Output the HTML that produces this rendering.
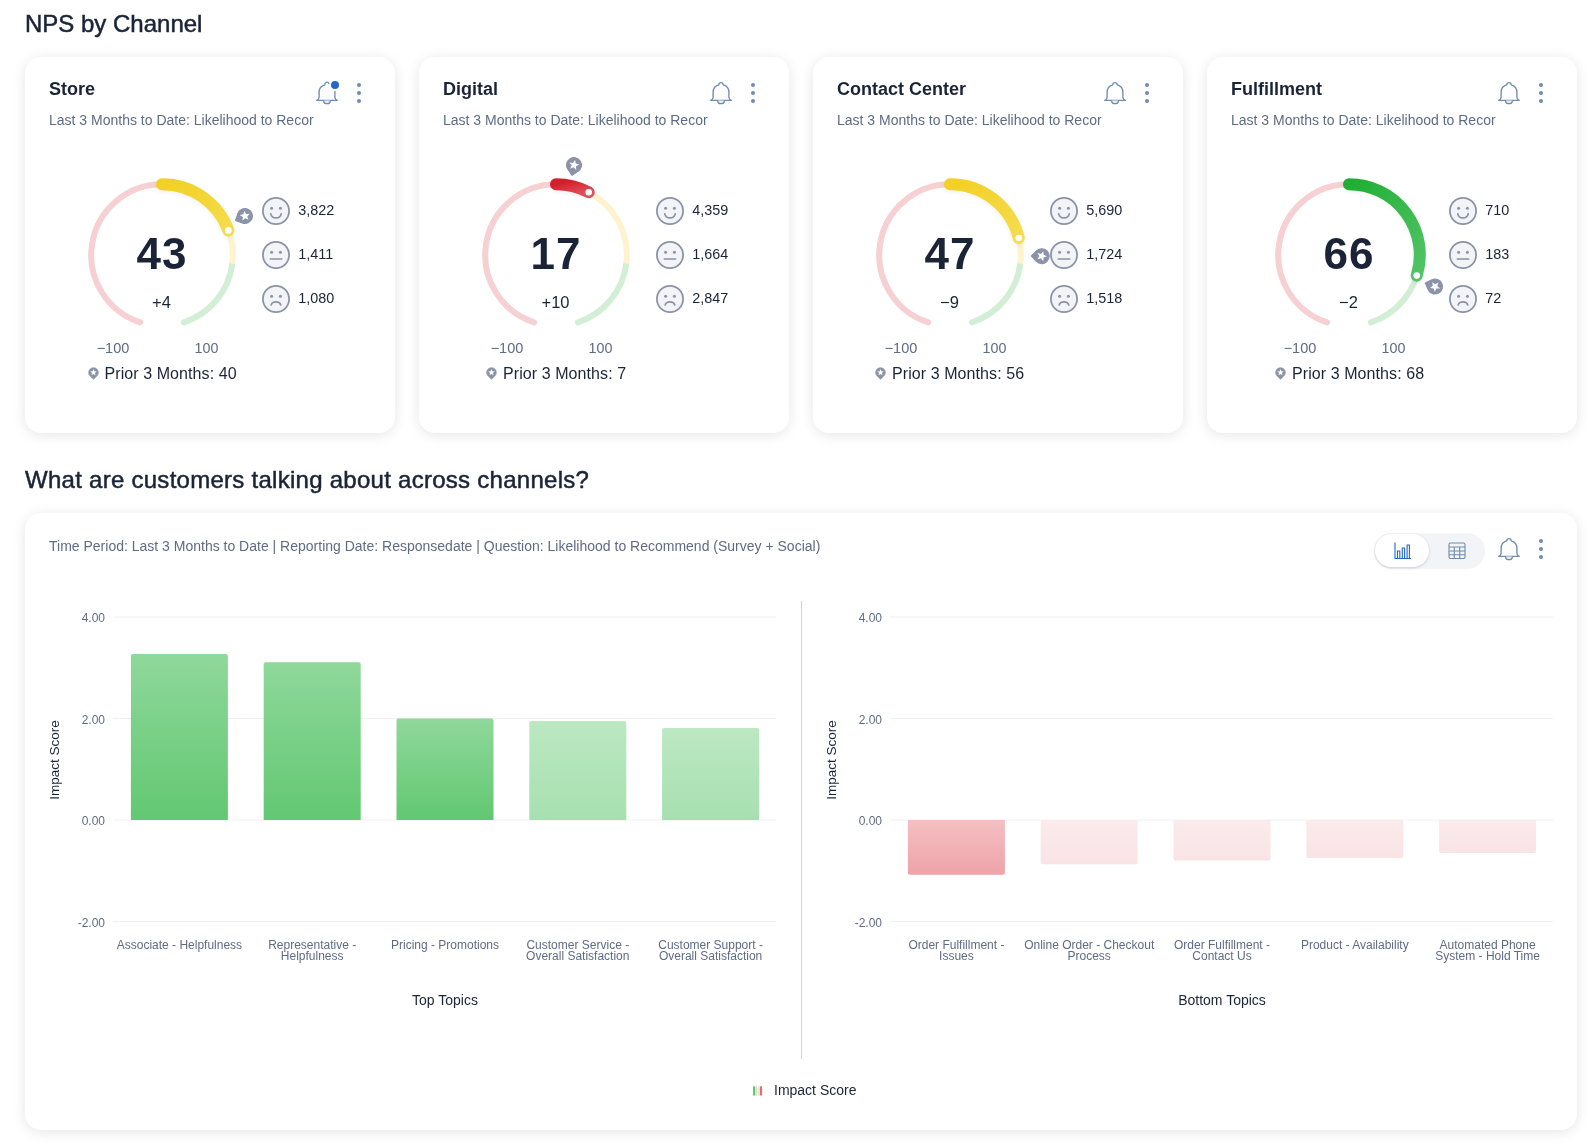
<!DOCTYPE html>
<html lang="en"><head><meta charset="utf-8"><title>NPS by Channel</title>
<style>
html,body{margin:0;padding:0;background:#fff}
body{width:1588px;height:1144px;position:relative;overflow:hidden;font-family:"Liberation Sans", sans-serif;color:#1b2437}
.abs{position:absolute}
#root{position:absolute;left:0;top:0;width:1588px;height:1144px;will-change:transform}
h2{position:absolute;margin:0;left:25px;font-size:24px;font-weight:400;color:#1b2437;white-space:nowrap;line-height:30px;-webkit-text-stroke:0.5px #1b2437}
.card{position:absolute;background:#fff;border-radius:16px;box-shadow:0 2px 13px rgba(0,0,0,0.105)}
.ctitle{position:absolute;left:24px;top:21px;font-size:18px;font-weight:700;line-height:22px;white-space:nowrap;color:#1b2437}
.csub{position:absolute;left:24px;top:54px;font-size:14px;line-height:18px;white-space:nowrap;color:#5f6b85}
.prior{position:absolute;top:306px;font-size:16px;letter-spacing:0.08px;line-height:22px;white-space:nowrap;display:flex;align-items:center;color:#1b2437}
svg text{font-family:"Liberation Sans", sans-serif}
</style></head><body>
<div id="root">
<h2 style="top:9px" id="h1">NPS by Channel</h2>

<div class="card" style="left:25px;top:57px;width:370px;height:376px">
<div class="ctitle">Store</div>
<div class="csub">Last 3 Months to Date: Likelihood to Recor</div>
<svg class="abs" style="left:290px;top:23px;overflow:visible" width="26" height="26" viewBox="0 0 26 26"><path d="M13.9 3.5A2.1 2.1 0 0 0 9.9 4.7C9.8 5.2 9.2 5.2 8.3 5.4C6.3 6.3 4.1 9.0 4.1 12.2V17.2C4.1 18.6 3.2 19.6 1.8 20.4H22.2C20.8 19.6 19.9 18.6 19.9 17.2V11.4" fill="none" stroke="#6f8bb0" stroke-width="1.35" stroke-linejoin="round" stroke-linecap="round"/><path d="M8.6 20.4A3.4 3.2 0 0 0 15.4 20.4" fill="#eef1f6" stroke="#6f8bb0" stroke-width="1.35"/><circle cx="20" cy="5" r="4" fill="#2469c8"/></svg>
<svg class="abs" style="left:331px;top:24px" width="6" height="24" viewBox="0 0 6 24"><circle cx="3" cy="4" r="2" fill="#6f8bb0"/><circle cx="3" cy="12" r="2" fill="#6f8bb0"/><circle cx="3" cy="20" r="2" fill="#6f8bb0"/></svg>
<svg class="abs" style="left:0;top:0" width="370" height="376" viewBox="0 0 370 376">
<defs><linearGradient id="g0" x1="0" y1="0" x2="1" y2="1"><stop offset="0" stop-color="#f2d024"/><stop offset="1" stop-color="#f6dc4e"/></linearGradient><filter id="sh0" x="-20%" y="-20%" width="140%" height="140%"><feGaussianBlur stdDeviation="2"/></filter></defs>
<path d="M115.12 265.33A70.8 70.8 0 0 1 137.00 127.20" fill="none" stroke="#f6d0d2" stroke-width="6" stroke-linecap="round"/>
<path d="M207.27 206.63A70.8 70.8 0 0 1 158.88 265.33" fill="none" stroke="#d2efd6" stroke-width="6" stroke-linecap="round"/>
<path d="M203.39 173.39A70.8 70.8 0 0 1 207.27 206.63" fill="none" stroke="#fdf4cf" stroke-width="6"/>
<path d="M137.00 127.20A70.8 70.8 0 0 1 203.39 173.39" fill="none" stroke="#000" stroke-opacity="0.05" stroke-width="12" stroke-linecap="round" filter="url(#sh0)" transform="translate(0 2)"/>
<path d="M137.00 127.20A70.8 70.8 0 0 1 203.39 173.39" fill="none" stroke="url(#g0)" stroke-width="12" stroke-linecap="round"/>
<circle cx="203.39" cy="173.39" r="3.3" fill="#fff"/>
<g transform="translate(219.97 158.96) scale(1.0)"><path transform="rotate(424.8)" d="M-5.25 5.36A7.5 7.5 0 1 1 5.25 5.36L0 10.5Z" fill="#8a93a8" stroke="#8a93a8" stroke-width="1" stroke-linejoin="round"/><path transform="rotate(424.8)" d="M0.00 -5.30L1.35 -1.86L5.04 -1.64L2.19 0.71L3.12 4.29L0.00 2.30L-3.12 4.29L-2.19 0.71L-5.04 -1.64L-1.35 -1.86Z" fill="#fff"/></g>
<text x="137.0" y="212" text-anchor="middle" font-size="44" font-weight="700" letter-spacing="1" fill="#1b2437">43</text>
<text x="136.5" y="251" text-anchor="middle" font-size="16.5" fill="#1b2437">+4</text>
<text x="88.0" y="296" text-anchor="middle" font-size="14.5" fill="#5f6b85">−100</text>
<text x="181.5" y="296" text-anchor="middle" font-size="14.3" fill="#5f6b85">100</text>
<circle cx="251.0" cy="154.0" r="13.1" fill="#f3f4f7" stroke="#8a93a8" stroke-width="1.75"/><circle cx="246.6" cy="151.3" r="1.5" fill="#8a93a8"/><circle cx="255.4" cy="151.3" r="1.5" fill="#8a93a8"/><path d="M245.8 156.8C246.8 162.2 255.2 162.2 256.2 156.8" fill="none" stroke="#8a93a8" stroke-width="1.7" stroke-linecap="round"/>
<text x="273.2" y="158.2" font-size="14.4" fill="#1b2437">3,822</text>
<circle cx="251.0" cy="198.0" r="13.1" fill="#f3f4f7" stroke="#8a93a8" stroke-width="1.75"/><circle cx="246.6" cy="195.3" r="1.5" fill="#8a93a8"/><circle cx="255.4" cy="195.3" r="1.5" fill="#8a93a8"/><path d="M245.4 202.0H256.6" fill="none" stroke="#8a93a8" stroke-width="1.7" stroke-linecap="round"/>
<text x="273.2" y="202.2" font-size="14.4" fill="#1b2437">1,411</text>
<circle cx="251.0" cy="242.0" r="13.1" fill="#f3f4f7" stroke="#8a93a8" stroke-width="1.75"/><circle cx="246.6" cy="239.3" r="1.5" fill="#8a93a8"/><circle cx="255.4" cy="239.3" r="1.5" fill="#8a93a8"/><path d="M246.2 247.9C247.4 243.9 254.6 243.9 255.8 247.9" fill="none" stroke="#8a93a8" stroke-width="1.7" stroke-linecap="round"/>
<text x="273.2" y="246.2" font-size="14.4" fill="#1b2437">1,080</text>
</svg>
<div class="prior" id="prior0" style="left:62.5px"><svg width="11" height="13" viewBox="-8.5 -8.5 17 20" style="margin-right:6px;position:relative;top:-1px"><g transform="translate(0.00 0.00) scale(1.0)"><path transform="rotate(0.0)" d="M-5.25 5.36A7.5 7.5 0 1 1 5.25 5.36L0 10.5Z" fill="#8a93a8" stroke="#8a93a8" stroke-width="1" stroke-linejoin="round"/><path transform="rotate(0.0)" d="M0.00 -5.30L1.35 -1.86L5.04 -1.64L2.19 0.71L3.12 4.29L0.00 2.30L-3.12 4.29L-2.19 0.71L-5.04 -1.64L-1.35 -1.86Z" fill="#fff"/></g></svg><span>Prior 3 Months: 40</span></div>
</div>
<div class="card" style="left:419px;top:57px;width:370px;height:376px">
<div class="ctitle">Digital</div>
<div class="csub">Last 3 Months to Date: Likelihood to Recor</div>
<svg class="abs" style="left:290px;top:23px;overflow:visible" width="26" height="26" viewBox="0 0 26 26"><path d="M1.8 20.4H22.2C20.8 19.6 19.9 18.6 19.9 17.2V12.2C19.9 9.0 17.7 6.3 15.7 5.4C14.8 5.2 14.2 5.2 14.1 4.7A2.1 2.1 0 0 0 9.9 4.7C9.8 5.2 9.2 5.2 8.3 5.4C6.3 6.3 4.1 9.0 4.1 12.2V17.2C4.1 18.6 3.2 19.6 1.8 20.4Z" fill="none" stroke="#6f8bb0" stroke-width="1.35" stroke-linejoin="round"/><path d="M8.6 20.4A3.4 3.2 0 0 0 15.4 20.4" fill="#eef1f6" stroke="#6f8bb0" stroke-width="1.35"/></svg>
<svg class="abs" style="left:331px;top:24px" width="6" height="24" viewBox="0 0 6 24"><circle cx="3" cy="4" r="2" fill="#6f8bb0"/><circle cx="3" cy="12" r="2" fill="#6f8bb0"/><circle cx="3" cy="20" r="2" fill="#6f8bb0"/></svg>
<svg class="abs" style="left:0;top:0" width="370" height="376" viewBox="0 0 370 376">
<defs><linearGradient id="g1" x1="0" y1="0" x2="1" y2="1"><stop offset="0" stop-color="#d21f2b"/><stop offset="1" stop-color="#e0505a"/></linearGradient><filter id="sh1" x="-20%" y="-20%" width="140%" height="140%"><feGaussianBlur stdDeviation="2"/></filter></defs>
<path d="M115.12 265.33A70.8 70.8 0 0 1 137.00 127.20" fill="none" stroke="#f6d0d2" stroke-width="6" stroke-linecap="round"/>
<path d="M207.27 206.63A70.8 70.8 0 0 1 158.88 265.33" fill="none" stroke="#d2efd6" stroke-width="6" stroke-linecap="round"/>
<path d="M169.74 135.22A70.8 70.8 0 0 1 207.27 206.63" fill="none" stroke="#fdf4cf" stroke-width="6"/>
<path d="M137.00 127.20A70.8 70.8 0 0 1 169.74 135.22" fill="none" stroke="#000" stroke-opacity="0.05" stroke-width="12" stroke-linecap="round" filter="url(#sh1)" transform="translate(0 2)"/>
<path d="M137.00 127.20A70.8 70.8 0 0 1 169.74 135.22" fill="none" stroke="url(#g1)" stroke-width="12" stroke-linecap="round"/>
<circle cx="169.74" cy="135.22" r="3.3" fill="#fff"/>
<g transform="translate(155.03 108.09) scale(1.0)"><path transform="rotate(371.3)" d="M-5.25 5.36A7.5 7.5 0 1 1 5.25 5.36L0 10.5Z" fill="#8a93a8" stroke="#8a93a8" stroke-width="1" stroke-linejoin="round"/><path transform="rotate(371.3)" d="M0.00 -5.30L1.35 -1.86L5.04 -1.64L2.19 0.71L3.12 4.29L0.00 2.30L-3.12 4.29L-2.19 0.71L-5.04 -1.64L-1.35 -1.86Z" fill="#fff"/></g>
<text x="137.0" y="212" text-anchor="middle" font-size="44" font-weight="700" letter-spacing="1" fill="#1b2437">17</text>
<text x="136.5" y="251" text-anchor="middle" font-size="16.5" fill="#1b2437">+10</text>
<text x="88.0" y="296" text-anchor="middle" font-size="14.5" fill="#5f6b85">−100</text>
<text x="181.5" y="296" text-anchor="middle" font-size="14.3" fill="#5f6b85">100</text>
<circle cx="251.0" cy="154.0" r="13.1" fill="#f3f4f7" stroke="#8a93a8" stroke-width="1.75"/><circle cx="246.6" cy="151.3" r="1.5" fill="#8a93a8"/><circle cx="255.4" cy="151.3" r="1.5" fill="#8a93a8"/><path d="M245.8 156.8C246.8 162.2 255.2 162.2 256.2 156.8" fill="none" stroke="#8a93a8" stroke-width="1.7" stroke-linecap="round"/>
<text x="273.2" y="158.2" font-size="14.4" fill="#1b2437">4,359</text>
<circle cx="251.0" cy="198.0" r="13.1" fill="#f3f4f7" stroke="#8a93a8" stroke-width="1.75"/><circle cx="246.6" cy="195.3" r="1.5" fill="#8a93a8"/><circle cx="255.4" cy="195.3" r="1.5" fill="#8a93a8"/><path d="M245.4 202.0H256.6" fill="none" stroke="#8a93a8" stroke-width="1.7" stroke-linecap="round"/>
<text x="273.2" y="202.2" font-size="14.4" fill="#1b2437">1,664</text>
<circle cx="251.0" cy="242.0" r="13.1" fill="#f3f4f7" stroke="#8a93a8" stroke-width="1.75"/><circle cx="246.6" cy="239.3" r="1.5" fill="#8a93a8"/><circle cx="255.4" cy="239.3" r="1.5" fill="#8a93a8"/><path d="M246.2 247.9C247.4 243.9 254.6 243.9 255.8 247.9" fill="none" stroke="#8a93a8" stroke-width="1.7" stroke-linecap="round"/>
<text x="273.2" y="246.2" font-size="14.4" fill="#1b2437">2,847</text>
</svg>
<div class="prior" id="prior1" style="left:67px"><svg width="11" height="13" viewBox="-8.5 -8.5 17 20" style="margin-right:6px;position:relative;top:-1px"><g transform="translate(0.00 0.00) scale(1.0)"><path transform="rotate(0.0)" d="M-5.25 5.36A7.5 7.5 0 1 1 5.25 5.36L0 10.5Z" fill="#8a93a8" stroke="#8a93a8" stroke-width="1" stroke-linejoin="round"/><path transform="rotate(0.0)" d="M0.00 -5.30L1.35 -1.86L5.04 -1.64L2.19 0.71L3.12 4.29L0.00 2.30L-3.12 4.29L-2.19 0.71L-5.04 -1.64L-1.35 -1.86Z" fill="#fff"/></g></svg><span>Prior 3 Months: 7</span></div>
</div>
<div class="card" style="left:813px;top:57px;width:370px;height:376px">
<div class="ctitle">Contact Center</div>
<div class="csub">Last 3 Months to Date: Likelihood to Recor</div>
<svg class="abs" style="left:290px;top:23px;overflow:visible" width="26" height="26" viewBox="0 0 26 26"><path d="M1.8 20.4H22.2C20.8 19.6 19.9 18.6 19.9 17.2V12.2C19.9 9.0 17.7 6.3 15.7 5.4C14.8 5.2 14.2 5.2 14.1 4.7A2.1 2.1 0 0 0 9.9 4.7C9.8 5.2 9.2 5.2 8.3 5.4C6.3 6.3 4.1 9.0 4.1 12.2V17.2C4.1 18.6 3.2 19.6 1.8 20.4Z" fill="none" stroke="#6f8bb0" stroke-width="1.35" stroke-linejoin="round"/><path d="M8.6 20.4A3.4 3.2 0 0 0 15.4 20.4" fill="#eef1f6" stroke="#6f8bb0" stroke-width="1.35"/></svg>
<svg class="abs" style="left:331px;top:24px" width="6" height="24" viewBox="0 0 6 24"><circle cx="3" cy="4" r="2" fill="#6f8bb0"/><circle cx="3" cy="12" r="2" fill="#6f8bb0"/><circle cx="3" cy="20" r="2" fill="#6f8bb0"/></svg>
<svg class="abs" style="left:0;top:0" width="370" height="376" viewBox="0 0 370 376">
<defs><linearGradient id="g2" x1="0" y1="0" x2="1" y2="1"><stop offset="0" stop-color="#f2d024"/><stop offset="1" stop-color="#f6dc4e"/></linearGradient><filter id="sh2" x="-20%" y="-20%" width="140%" height="140%"><feGaussianBlur stdDeviation="2"/></filter></defs>
<path d="M115.12 265.33A70.8 70.8 0 0 1 137.00 127.20" fill="none" stroke="#f6d0d2" stroke-width="6" stroke-linecap="round"/>
<path d="M207.27 206.63A70.8 70.8 0 0 1 158.88 265.33" fill="none" stroke="#d2efd6" stroke-width="6" stroke-linecap="round"/>
<path d="M205.74 181.04A70.8 70.8 0 0 1 207.27 206.63" fill="none" stroke="#fdf4cf" stroke-width="6"/>
<path d="M137.00 127.20A70.8 70.8 0 0 1 205.74 181.04" fill="none" stroke="#000" stroke-opacity="0.05" stroke-width="12" stroke-linecap="round" filter="url(#sh2)" transform="translate(0 2)"/>
<path d="M137.00 127.20A70.8 70.8 0 0 1 205.74 181.04" fill="none" stroke="url(#g2)" stroke-width="12" stroke-linecap="round"/>
<circle cx="205.74" cy="181.04" r="3.3" fill="#fff"/>
<g transform="translate(228.69 199.15) scale(1.0)"><path transform="rotate(450.7)" d="M-5.25 5.36A7.5 7.5 0 1 1 5.25 5.36L0 10.5Z" fill="#8a93a8" stroke="#8a93a8" stroke-width="1" stroke-linejoin="round"/><path transform="rotate(450.7)" d="M0.00 -5.30L1.35 -1.86L5.04 -1.64L2.19 0.71L3.12 4.29L0.00 2.30L-3.12 4.29L-2.19 0.71L-5.04 -1.64L-1.35 -1.86Z" fill="#fff"/></g>
<text x="137.0" y="212" text-anchor="middle" font-size="44" font-weight="700" letter-spacing="1" fill="#1b2437">47</text>
<text x="136.5" y="251" text-anchor="middle" font-size="16.5" fill="#1b2437">−9</text>
<text x="88.0" y="296" text-anchor="middle" font-size="14.5" fill="#5f6b85">−100</text>
<text x="181.5" y="296" text-anchor="middle" font-size="14.3" fill="#5f6b85">100</text>
<circle cx="251.0" cy="154.0" r="13.1" fill="#f3f4f7" stroke="#8a93a8" stroke-width="1.75"/><circle cx="246.6" cy="151.3" r="1.5" fill="#8a93a8"/><circle cx="255.4" cy="151.3" r="1.5" fill="#8a93a8"/><path d="M245.8 156.8C246.8 162.2 255.2 162.2 256.2 156.8" fill="none" stroke="#8a93a8" stroke-width="1.7" stroke-linecap="round"/>
<text x="273.2" y="158.2" font-size="14.4" fill="#1b2437">5,690</text>
<circle cx="251.0" cy="198.0" r="13.1" fill="#f3f4f7" stroke="#8a93a8" stroke-width="1.75"/><circle cx="246.6" cy="195.3" r="1.5" fill="#8a93a8"/><circle cx="255.4" cy="195.3" r="1.5" fill="#8a93a8"/><path d="M245.4 202.0H256.6" fill="none" stroke="#8a93a8" stroke-width="1.7" stroke-linecap="round"/>
<text x="273.2" y="202.2" font-size="14.4" fill="#1b2437">1,724</text>
<circle cx="251.0" cy="242.0" r="13.1" fill="#f3f4f7" stroke="#8a93a8" stroke-width="1.75"/><circle cx="246.6" cy="239.3" r="1.5" fill="#8a93a8"/><circle cx="255.4" cy="239.3" r="1.5" fill="#8a93a8"/><path d="M246.2 247.9C247.4 243.9 254.6 243.9 255.8 247.9" fill="none" stroke="#8a93a8" stroke-width="1.7" stroke-linecap="round"/>
<text x="273.2" y="246.2" font-size="14.4" fill="#1b2437">1,518</text>
</svg>
<div class="prior" id="prior2" style="left:62px"><svg width="11" height="13" viewBox="-8.5 -8.5 17 20" style="margin-right:6px;position:relative;top:-1px"><g transform="translate(0.00 0.00) scale(1.0)"><path transform="rotate(0.0)" d="M-5.25 5.36A7.5 7.5 0 1 1 5.25 5.36L0 10.5Z" fill="#8a93a8" stroke="#8a93a8" stroke-width="1" stroke-linejoin="round"/><path transform="rotate(0.0)" d="M0.00 -5.30L1.35 -1.86L5.04 -1.64L2.19 0.71L3.12 4.29L0.00 2.30L-3.12 4.29L-2.19 0.71L-5.04 -1.64L-1.35 -1.86Z" fill="#fff"/></g></svg><span>Prior 3 Months: 56</span></div>
</div>
<div class="card" style="left:1207px;top:57px;width:370px;height:376px">
<div class="ctitle">Fulfillment</div>
<div class="csub">Last 3 Months to Date: Likelihood to Recor</div>
<svg class="abs" style="left:290px;top:23px;overflow:visible" width="26" height="26" viewBox="0 0 26 26"><path d="M1.8 20.4H22.2C20.8 19.6 19.9 18.6 19.9 17.2V12.2C19.9 9.0 17.7 6.3 15.7 5.4C14.8 5.2 14.2 5.2 14.1 4.7A2.1 2.1 0 0 0 9.9 4.7C9.8 5.2 9.2 5.2 8.3 5.4C6.3 6.3 4.1 9.0 4.1 12.2V17.2C4.1 18.6 3.2 19.6 1.8 20.4Z" fill="none" stroke="#6f8bb0" stroke-width="1.35" stroke-linejoin="round"/><path d="M8.6 20.4A3.4 3.2 0 0 0 15.4 20.4" fill="#eef1f6" stroke="#6f8bb0" stroke-width="1.35"/></svg>
<svg class="abs" style="left:331px;top:24px" width="6" height="24" viewBox="0 0 6 24"><circle cx="3" cy="4" r="2" fill="#6f8bb0"/><circle cx="3" cy="12" r="2" fill="#6f8bb0"/><circle cx="3" cy="20" r="2" fill="#6f8bb0"/></svg>
<svg class="abs" style="left:0;top:0" width="370" height="376" viewBox="0 0 370 376">
<defs><linearGradient id="g3" x1="0" y1="0" x2="1" y2="1"><stop offset="0" stop-color="#1fae33"/><stop offset="1" stop-color="#52c466"/></linearGradient><filter id="sh3" x="-20%" y="-20%" width="140%" height="140%"><feGaussianBlur stdDeviation="2"/></filter></defs>
<path d="M120.12 265.33A70.8 70.8 0 0 1 142.00 127.20" fill="none" stroke="#f6d0d2" stroke-width="6" stroke-linecap="round"/>
<path d="M212.27 206.63A70.8 70.8 0 0 1 163.88 265.33" fill="none" stroke="#d2efd6" stroke-width="6" stroke-linecap="round"/>
<path d="M142.00 127.20A70.8 70.8 0 0 1 209.74 218.61" fill="none" stroke="#000" stroke-opacity="0.05" stroke-width="12" stroke-linecap="round" filter="url(#sh3)" transform="translate(0 2)"/>
<path d="M142.00 127.20A70.8 70.8 0 0 1 209.74 218.61" fill="none" stroke="url(#g3)" stroke-width="12" stroke-linecap="round"/>
<circle cx="209.74" cy="218.61" r="3.3" fill="#fff"/>
<g transform="translate(228.08 229.60) scale(1.0)"><path transform="rotate(470.2)" d="M-5.25 5.36A7.5 7.5 0 1 1 5.25 5.36L0 10.5Z" fill="#8a93a8" stroke="#8a93a8" stroke-width="1" stroke-linejoin="round"/><path transform="rotate(470.2)" d="M0.00 -5.30L1.35 -1.86L5.04 -1.64L2.19 0.71L3.12 4.29L0.00 2.30L-3.12 4.29L-2.19 0.71L-5.04 -1.64L-1.35 -1.86Z" fill="#fff"/></g>
<text x="142.0" y="212" text-anchor="middle" font-size="44" font-weight="700" letter-spacing="1" fill="#1b2437">66</text>
<text x="141.5" y="251" text-anchor="middle" font-size="16.5" fill="#1b2437">−2</text>
<text x="93.0" y="296" text-anchor="middle" font-size="14.5" fill="#5f6b85">−100</text>
<text x="186.5" y="296" text-anchor="middle" font-size="14.3" fill="#5f6b85">100</text>
<circle cx="256.0" cy="154.0" r="13.1" fill="#f3f4f7" stroke="#8a93a8" stroke-width="1.75"/><circle cx="251.6" cy="151.3" r="1.5" fill="#8a93a8"/><circle cx="260.4" cy="151.3" r="1.5" fill="#8a93a8"/><path d="M250.8 156.8C251.8 162.2 260.2 162.2 261.2 156.8" fill="none" stroke="#8a93a8" stroke-width="1.7" stroke-linecap="round"/>
<text x="278.2" y="158.2" font-size="14.4" fill="#1b2437">710</text>
<circle cx="256.0" cy="198.0" r="13.1" fill="#f3f4f7" stroke="#8a93a8" stroke-width="1.75"/><circle cx="251.6" cy="195.3" r="1.5" fill="#8a93a8"/><circle cx="260.4" cy="195.3" r="1.5" fill="#8a93a8"/><path d="M250.4 202.0H261.6" fill="none" stroke="#8a93a8" stroke-width="1.7" stroke-linecap="round"/>
<text x="278.2" y="202.2" font-size="14.4" fill="#1b2437">183</text>
<circle cx="256.0" cy="242.0" r="13.1" fill="#f3f4f7" stroke="#8a93a8" stroke-width="1.75"/><circle cx="251.6" cy="239.3" r="1.5" fill="#8a93a8"/><circle cx="260.4" cy="239.3" r="1.5" fill="#8a93a8"/><path d="M251.2 247.9C252.4 243.9 259.6 243.9 260.8 247.9" fill="none" stroke="#8a93a8" stroke-width="1.7" stroke-linecap="round"/>
<text x="278.2" y="246.2" font-size="14.4" fill="#1b2437">72</text>
</svg>
<div class="prior" id="prior3" style="left:68px"><svg width="11" height="13" viewBox="-8.5 -8.5 17 20" style="margin-right:6px;position:relative;top:-1px"><g transform="translate(0.00 0.00) scale(1.0)"><path transform="rotate(0.0)" d="M-5.25 5.36A7.5 7.5 0 1 1 5.25 5.36L0 10.5Z" fill="#8a93a8" stroke="#8a93a8" stroke-width="1" stroke-linejoin="round"/><path transform="rotate(0.0)" d="M0.00 -5.30L1.35 -1.86L5.04 -1.64L2.19 0.71L3.12 4.29L0.00 2.30L-3.12 4.29L-2.19 0.71L-5.04 -1.64L-1.35 -1.86Z" fill="#fff"/></g></svg><span>Prior 3 Months: 68</span></div>
</div>
<h2 style="top:465px;letter-spacing:0.27px" id="h2">What are customers talking about across channels?</h2>
<div class="card" style="left:25px;top:513px;width:1552px;height:617px">
<div class="csub" style="top:24px" id="tp">Time Period: Last 3 Months to Date | Reporting Date: Responsedate | Question: Likelihood to Recommend (Survey + Social)</div>
<div class="abs" style="left:1349px;top:20px;width:111px;height:36px;border-radius:18px;background:#f3f4f7"></div>
<div class="abs" style="left:1350px;top:21px;width:54px;height:33px;border-radius:17px;background:#fff;box-shadow:0 1px 3px rgba(20,30,60,0.18)"></div>
<svg class="abs" style="left:1369px;top:29px" width="18" height="18" viewBox="0 0 18 18"><path d="M1 0.5V16.5H17M3.5 16.5V9H5.8V16.5M8.3 16.5V6H10.6V16.5M13.1 16.5V3H15.4V16.5" fill="none" stroke="#2469c8" stroke-width="1.1"/></svg>
<svg class="abs" style="left:1423px;top:29px" width="18" height="18" viewBox="0 0 18 18"><rect x="1" y="1" width="16" height="15.5" rx="1.5" fill="none" stroke="#6f8bb0" stroke-width="1.1"/><path d="M1 5H17M1 9H17M1 12.8H17M6.3 5V16.5M11.7 5V16.5" fill="none" stroke="#6f8bb0" stroke-width="1.1"/></svg>
<svg class="abs" style="left:1472px;top:23px;overflow:visible" width="26" height="26" viewBox="0 0 26 26"><path d="M1.8 20.4H22.2C20.8 19.6 19.9 18.6 19.9 17.2V12.2C19.9 9.0 17.7 6.3 15.7 5.4C14.8 5.2 14.2 5.2 14.1 4.7A2.1 2.1 0 0 0 9.9 4.7C9.8 5.2 9.2 5.2 8.3 5.4C6.3 6.3 4.1 9.0 4.1 12.2V17.2C4.1 18.6 3.2 19.6 1.8 20.4Z" fill="none" stroke="#6f8bb0" stroke-width="1.35" stroke-linejoin="round"/><path d="M8.6 20.4A3.4 3.2 0 0 0 15.4 20.4" fill="#eef1f6" stroke="#6f8bb0" stroke-width="1.35"/></svg>
<svg class="abs" style="left:1513px;top:24px" width="6" height="24" viewBox="0 0 6 24"><circle cx="3" cy="4" r="2" fill="#6f8bb0"/><circle cx="3" cy="12" r="2" fill="#6f8bb0"/><circle cx="3" cy="20" r="2" fill="#6f8bb0"/></svg>
<svg class="abs" style="left:0;top:0" width="1552" height="617" viewBox="0 0 1552 617">
<defs>
<linearGradient id="gs" x1="0" y1="0" x2="0" y2="1"><stop offset="0" stop-color="#8fd89b"/><stop offset="1" stop-color="#62c872"/></linearGradient>
<linearGradient id="gl" x1="0" y1="0" x2="0" y2="1"><stop offset="0" stop-color="#bce8c2"/><stop offset="1" stop-color="#a7e0b0"/></linearGradient>
<linearGradient id="rs" x1="0" y1="0" x2="0" y2="1"><stop offset="0" stop-color="#f4c0c3"/><stop offset="1" stop-color="#eea3a8"/></linearGradient>
<linearGradient id="rl" x1="0" y1="0" x2="0" y2="1"><stop offset="0" stop-color="#fbebec"/><stop offset="1" stop-color="#f9e3e5"/></linearGradient>
</defs>
<path d="M88 104.0H751" stroke="#eef0f3" stroke-width="1"/>
<text x="80" y="109.0" text-anchor="end" font-size="12" fill="#5f6b85">4.00</text>
<path d="M88 205.5H751" stroke="#eef0f3" stroke-width="1"/>
<text x="80" y="210.5" text-anchor="end" font-size="12" fill="#5f6b85">2.00</text>
<path d="M88 307.0H751" stroke="#eef0f3" stroke-width="1"/>
<text x="80" y="312.0" text-anchor="end" font-size="12" fill="#5f6b85">0.00</text>
<path d="M88 408.5H751" stroke="#eef0f3" stroke-width="1"/>
<text x="80" y="413.5" text-anchor="end" font-size="12" fill="#5f6b85">-2.00</text>
<path d="M105.9 307V143.0Q105.9 141.0 107.9 141.0H200.9Q202.9 141.0 202.9 143.0V307Z" fill="url(#gs)"/>
<text x="154.4" y="436" text-anchor="middle" font-size="12" fill="#5f6b85">Associate - Helpfulness</text>
<path d="M238.7 307V151.2Q238.7 149.2 240.7 149.2H333.7Q335.7 149.2 335.7 151.2V307Z" fill="url(#gs)"/>
<text x="287.2" y="436" text-anchor="middle" font-size="12" fill="#5f6b85">Representative -</text>
<text x="287.2" y="447" text-anchor="middle" font-size="12" fill="#5f6b85">Helpfulness</text>
<path d="M371.5 307V207.5Q371.5 205.5 373.5 205.5H466.5Q468.5 205.5 468.5 207.5V307Z" fill="url(#gs)"/>
<text x="420.0" y="436" text-anchor="middle" font-size="12" fill="#5f6b85">Pricing - Promotions</text>
<path d="M504.3 307V210.0Q504.3 208.0 506.3 208.0H599.3Q601.3 208.0 601.3 210.0V307Z" fill="url(#gl)"/>
<text x="552.8" y="436" text-anchor="middle" font-size="12" fill="#5f6b85">Customer Service -</text>
<text x="552.8" y="447" text-anchor="middle" font-size="12" fill="#5f6b85">Overall Satisfaction</text>
<path d="M637.1 307V217.1Q637.1 215.1 639.1 215.1H732.1Q734.1 215.1 734.1 217.1V307Z" fill="url(#gl)"/>
<text x="685.6" y="436" text-anchor="middle" font-size="12" fill="#5f6b85">Customer Support -</text>
<text x="685.6" y="447" text-anchor="middle" font-size="12" fill="#5f6b85">Overall Satisfaction</text>
<text x="420.0" y="492" text-anchor="middle" font-size="14" fill="#1b2437">Top Topics</text>
<text transform="translate(33.5 247) rotate(-90)" text-anchor="middle" font-size="13.5" fill="#1b2437">Impact Score</text>
<path d="M865 104.0H1528" stroke="#eef0f3" stroke-width="1"/>
<text x="857" y="109.0" text-anchor="end" font-size="12" fill="#5f6b85">4.00</text>
<path d="M865 205.5H1528" stroke="#eef0f3" stroke-width="1"/>
<text x="857" y="210.5" text-anchor="end" font-size="12" fill="#5f6b85">2.00</text>
<path d="M865 307.0H1528" stroke="#eef0f3" stroke-width="1"/>
<text x="857" y="312.0" text-anchor="end" font-size="12" fill="#5f6b85">0.00</text>
<path d="M865 408.5H1528" stroke="#eef0f3" stroke-width="1"/>
<text x="857" y="413.5" text-anchor="end" font-size="12" fill="#5f6b85">-2.00</text>
<path d="M882.9 307V359.8Q882.9 361.8 884.9 361.8H977.9Q979.9 361.8 979.9 359.8V307Z" fill="url(#rs)"/>
<text x="931.4" y="436" text-anchor="middle" font-size="12" fill="#5f6b85">Order Fulfillment -</text>
<text x="931.4" y="447" text-anchor="middle" font-size="12" fill="#5f6b85">Issues</text>
<path d="M1015.7 307V349.2Q1015.7 351.2 1017.7 351.2H1110.7Q1112.7 351.2 1112.7 349.2V307Z" fill="url(#rl)"/>
<text x="1064.2" y="436" text-anchor="middle" font-size="12" fill="#5f6b85">Online Order - Checkout</text>
<text x="1064.2" y="447" text-anchor="middle" font-size="12" fill="#5f6b85">Process</text>
<path d="M1148.5 307V345.6Q1148.5 347.6 1150.5 347.6H1243.5Q1245.5 347.6 1245.5 345.6V307Z" fill="url(#rl)"/>
<text x="1197.0" y="436" text-anchor="middle" font-size="12" fill="#5f6b85">Order Fulfillment -</text>
<text x="1197.0" y="447" text-anchor="middle" font-size="12" fill="#5f6b85">Contact Us</text>
<path d="M1281.3 307V343.1Q1281.3 345.1 1283.3 345.1H1376.3Q1378.3 345.1 1378.3 343.1V307Z" fill="url(#rl)"/>
<text x="1329.8" y="436" text-anchor="middle" font-size="12" fill="#5f6b85">Product - Availability</text>
<path d="M1414.1 307V338.0Q1414.1 340.0 1416.1 340.0H1509.1Q1511.1 340.0 1511.1 338.0V307Z" fill="url(#rl)"/>
<text x="1462.6" y="436" text-anchor="middle" font-size="12" fill="#5f6b85">Automated Phone</text>
<text x="1462.6" y="447" text-anchor="middle" font-size="12" fill="#5f6b85">System - Hold Time</text>
<text x="1197.0" y="492" text-anchor="middle" font-size="14" fill="#1b2437">Bottom Topics</text>
<text transform="translate(810.5 247) rotate(-90)" text-anchor="middle" font-size="13.5" fill="#1b2437">Impact Score</text>
<path d="M776.5 88V546" stroke="#cfd2d8" stroke-width="1"/>
<rect x="728" y="573.3" width="2" height="9.2" fill="#62c872"/><rect x="730.4" y="573.3" width="1.8" height="9.2" fill="#bce8c2"/><rect x="733" y="573.3" width="1.8" height="9.2" fill="#f9dadc"/><rect x="735" y="573.3" width="2.1" height="9.2" fill="#ea6a72"/>
<text x="749" y="582" font-size="14" fill="#1b2437">Impact Score</text>
</svg></div>
</div>
</body></html>
